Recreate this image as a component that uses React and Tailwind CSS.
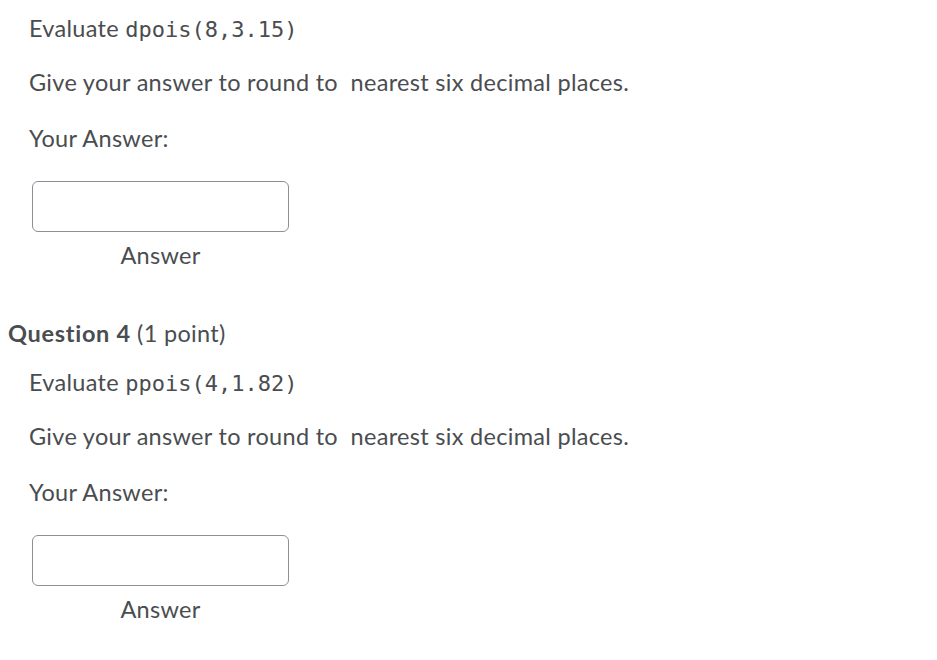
import React from "react";

const mono = { fontFamily: '"DejaVu Sans Mono", "Liberation Mono", monospace' };

function AnswerBox() {
  return (
    <div className="ml-[32px] w-[257px] flex flex-col items-center">
      <div className="w-full h-[51px] border border-[#8a9096] rounded-[6px] bg-white" />
      <div className="mt-[9px] leading-[28px]">Answer</div>
    </div>
  );
}

function QuestionBody({ fn, args }) {
  return (
    <div>
      <div className="pl-[29px] leading-[28px]">
        Evaluate{" "}
        <span className="text-[22px] tracking-normal" style={mono}>
          {fn}({args})
        </span>
      </div>
      <div className="pl-[29px] mt-[24px] leading-[28px]">
        Give your answer to round to&nbsp; nearest six decimal places.
      </div>
      <div className="pl-[29px] mt-[28px] leading-[28px]">Your Answer:</div>
      <div className="mt-[29px]">
        <AnswerBox />
      </div>
    </div>
  );
}

export default function App() {
  return (
    <div
      className="w-[937px] h-[660px] bg-white text-[#4a4d50] text-[23.5px] tracking-[0.3px] overflow-hidden"
      style={{ fontFamily: 'Lato, "Open Sans", sans-serif' }}
    >
      <div className="pt-[14px]">
        <QuestionBody fn="dpois" args="8,3.15" />
      </div>
      <div className="mt-[50px] pl-[8px] leading-[28px]">
        <span className="font-bold tracking-[0.7px]">Question 4</span> (1 point)
      </div>
      <div className="mt-[21px]">
        <QuestionBody fn="ppois" args="4,1.82" />
      </div>
    </div>
  );
}
